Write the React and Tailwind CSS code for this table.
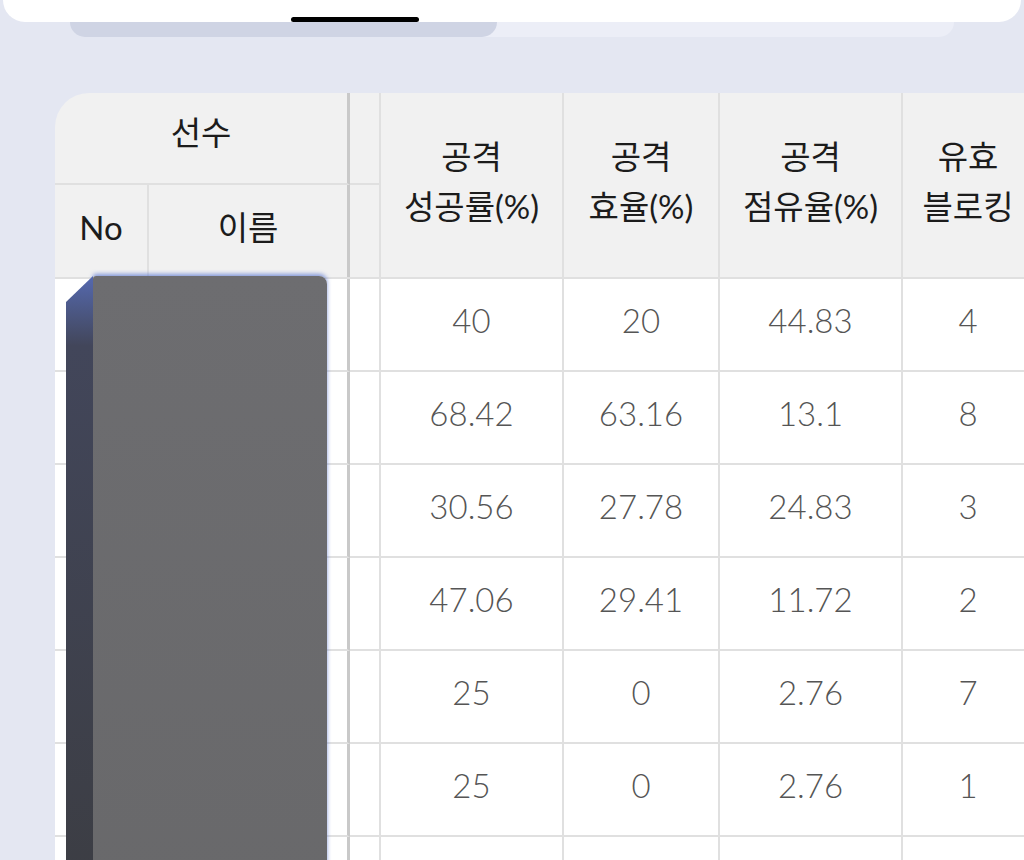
const ROWS = [
  ['40', '20', '44.83', '4'],
  ['68.42', '63.16', '13.1', '8'],
  ['30.56', '27.78', '24.83', '3'],
  ['47.06', '29.41', '11.72', '2'],
  ['25', '0', '2.76', '7'],
  ['25', '0', '2.76', '1'],
  ['', '', '', ''],
]

const STAT_W = ['w-[183px]', 'w-[156px]', 'w-[183px]', 'w-[132px]']

const HEADERS = [
  ['공격', '성공률(%)'],
  ['공격', '효율(%)'],
  ['공격', '점유율(%)'],
  ['유효', '블로킹'],
]

const font = { fontFamily: 'Lato, "Noto Sans CJK KR", sans-serif' }

export default function App() {
  return (
    <div className="w-[1024px] h-[860px] overflow-hidden bg-[#e4e7f2]" style={font}>
      {/* sheet above, cut off at the top */}
      <div className="relative z-20 mx-[3px] h-[22px] bg-white rounded-b-[40px] pt-[17px] pl-[288px]">
        <div className="w-[128px] h-[5px] rounded-full bg-black" />
      </div>
      {/* stacked card edges under the sheet */}
      <div className="flex h-[15px]">
        <div className="relative z-10 ml-[70px] w-[427px] h-full bg-[#cfd4e4] rounded-b-[28px]" />
        <div className="-ml-[40px] w-[497px] h-full bg-[#eceef7] rounded-br-[28px]" />
      </div>

      {/* table */}
      <div className="relative mt-[56px] ml-[55px] w-[1100px] rounded-tl-[34px] overflow-hidden">
        {/* header */}
        <div className="flex bg-[#f1f1f1] text-[33px] text-[#1c1c1c]">
          <div className="flex flex-col w-[295px]">
            <div className="h-[92px] flex items-center justify-center pb-[10px] border-b-2 border-[#e0e0e0] border-r-[3px] border-r-[#c9c9c9]">
              선수
            </div>
            <div className="flex h-[94px] border-b-2 border-[#e0e0e0]">
              <div className="w-[94px] flex items-center justify-center pb-[6px] border-r-2 border-[#e0e0e0]">No</div>
              <div className="w-[201px] flex items-center justify-center pb-[6px] border-r-[3px] border-[#c9c9c9]">이름</div>
            </div>
          </div>
          <div className="flex flex-col w-[31px]">
            <div className="h-[92px] border-b-2 border-r-2 border-[#e0e0e0]" />
            <div className="h-[94px] border-b-2 border-r-2 border-[#e0e0e0]" />
          </div>
          {HEADERS.map((h, i) => (
            <div
              key={i}
              className={`${STAT_W[i]} h-[186px] flex flex-col items-center justify-center pb-[8px] leading-[50px] whitespace-nowrap border-b-2 border-r-2 border-[#e0e0e0]`}
            >
              <span>{h[0]}</span>
              <span>{h[1]}</span>
            </div>
          ))}
        </div>

        {/* body */}
        {ROWS.map((r, ri) => (
          <div key={ri} className="flex h-[93px] bg-white text-[33px] font-light text-[#555555]">
            <div className="w-[94px] border-b-2 border-r-2 border-[#e0e0e0]" />
            <div className="w-[201px] border-b-2 border-[#e0e0e0] border-r-[3px] border-r-[#c9c9c9]" />
            <div className="w-[31px] border-b-2 border-r-2 border-[#e0e0e0]" />
            {r.map((v, i) => (
              <div
                key={i}
                className={`${STAT_W[i]} flex items-center justify-center pb-[7px] border-b-2 border-r-2 border-[#e0e0e0]`}
              >
                {v}
              </div>
            ))}
          </div>
        ))}

        {/* redaction block over the names */}
        <div className="absolute left-[11px] top-[183px] w-[261px] h-[700px] flex">
          <div className="w-[27px] h-full bg-linear-to-b from-[#5569b0] via-[#42465a] via-[10%] to-[#3b3c40] [clip-path:polygon(100%_0,100%_100%,0_100%,0_26px)]" />
          <div className="flex-1 h-full rounded-tr-[8px] rounded-tl-[3px] bg-linear-to-b from-[#6d6d70] to-[#68686a] shadow-[0_-2px_4px_rgba(92,120,210,0.75)]" />
        </div>
      </div>
    </div>
  )
}
